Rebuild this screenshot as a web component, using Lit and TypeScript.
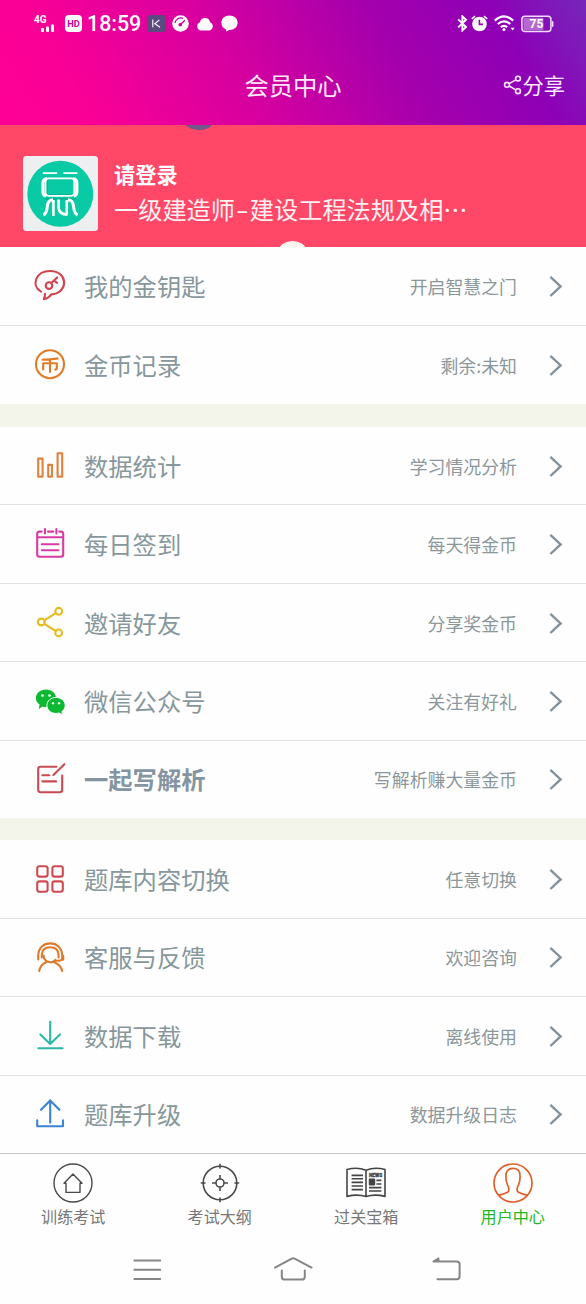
import { LitElement, html, svg, css } from "lit";
import { customElement, property } from "lit/decorators.js";
import { classMap } from "lit/directives/class-map.js";

const CJK = css`"Noto Sans CJK SC", "Liberation Sans", sans-serif`;

const icons: Record<string, any> = {
  key: svg`<g stroke="#d0454f"><path d="M8 22.6C-2.2 16.6 2.6 2 17 2C35.6 2 35.6 24.4 18.4 25.4C16.6 28 14.4 29.4 10.8 30.3C11.7 28.4 12 26.9 12 24.8"/><circle cx="16" cy="16.6" r="3.3"/><path d="M18.2 14.1L24.2 8.4M21.2 11.6L24 13.8"/></g>`,
  coin: svg`<circle cx="17" cy="16.2" r="14" stroke="#e37a26"/><path stroke="#e37a26" stroke-linecap="butt" d="M8.6 11.8Q17 11.6 25.4 10.4M17 11.2V24.8M10.2 22.2V15.2H23.8V20.4Q23.8 21.6 21.4 21.6"/>`,
  bars: svg`<g stroke="#e0823c"><rect x="5.2" y="9.6" width="4.4" height="18"/><rect x="15.2" y="15.9" width="3.8" height="11.7"/><rect x="24.6" y="4.2" width="4.6" height="23.4"/></g>`,
  calendar: svg`<g stroke="#d93aa4"><path d="M8.6 4.6H6.4Q4.2 4.6 4.2 6.8V27.6Q4.2 29.8 6.4 29.8H28Q30.2 29.8 30.2 27.6V6.8Q30.2 4.6 28 4.6H26.2M15 4.6H20.4M4.2 10.2H30.2M12 2V6.4M23.4 2V6.4M8.8 17.2H25.4M8.8 23.2H25.4"/></g>`,
  share: svg`<g stroke="#e4bd22"><circle cx="25.7" cy="5.3" r="3.4"/><circle cx="8.3" cy="16" r="3.4"/><circle cx="25.7" cy="26.9" r="3.4"/><path d="M11.3 14.3L22.8 7.1M11.3 17.8L22.8 25"/></g>`,
  wechat: svg`<g stroke="none"><path fill="#0cb832" d="M13 5.5C7.2 5.5 2.9 9.2 2.9 14C2.9 16.7 4.3 19 6.6 20.6L5.8 25L9.6 22.4C10.7 22.8 11.8 23 13 23C18.8 23 23 18.8 23 14S18.8 5.5 13 5.5Z"/><path stroke="#fff" stroke-width="1" fill="#0cb832" d="M23 13.4C17.8 13.4 13.9 17 13.9 21.4S17.8 29.4 23 29.4C24.1 29.4 25.1 29.2 26 29L29.7 31L28.9 27.6C31 26.1 32.2 23.9 32.2 21.4C32.2 17 28.2 13.4 23 13.4Z"/><g fill="#dff7e2"><circle cx="9.5" cy="11.6" r="1.4"/><circle cx="16.5" cy="11.6" r="1.4"/><circle cx="20" cy="19.2" r="1.2"/><circle cx="26" cy="19.2" r="1.2"/></g></g>`,
  edit: svg`<g stroke="#c74a54"><path d="M23.4 4.8H7.6Q5.2 4.8 5.2 7.2V27.8Q5.2 30.2 7.6 30.2H26.8Q29.2 30.2 29.2 27.8V13.6M31.4 2.2L20.4 13M9.4 13.2H16.4M9.4 19.4H23"/></g>`,
  grid: svg`<g stroke="#cf4b54"><rect x="4.2" y="4.2" width="10.4" height="10.4" rx="2.2"/><rect x="19.4" y="4.2" width="10.4" height="10.4" rx="2.2"/><rect x="4.2" y="19.4" width="10.4" height="10.4" rx="2.2"/><rect x="19.4" y="19.4" width="10.4" height="10.4" rx="2.2"/></g>`,
  service: svg`<g stroke="#df7a2c"><path d="M5.2 19.4V15.2C5.6 7.6 10.6 3.4 17.2 3.4S28.8 7.6 29.2 15.2V19.4"/><path d="M8.8 17.6V15C9 10 12.2 7.2 17.2 7.2S25.4 10 25.6 15V17.6"/><path d="M10.6 15.6C10.6 19.4 13.4 22.2 17.2 22.2C19.6 22.2 21.4 21.2 22.4 19.8M30.2 15.8V19.6L26.4 20.8H22"/><path d="M6.2 31C7 26.8 9.4 23.8 13.2 22.2M21.4 22.2C25.2 23.8 28.2 26.8 29.2 31"/></g>`,
  download: svg`<g stroke="#2cb8a6"><path d="M17.2 2.8V25M7.4 15.4L17.2 25L27 15.4M5.4 29.2H29.6"/></g>`,
  upload: svg`<g stroke="#3a84d2"><path d="M17.2 25.6V3.4M8 12.8L17.2 3.4L26.4 12.8M4.2 23.4V29.2H30V23.4"/></g>`,
  tabHome: svg`<g stroke="#4a4a4a" stroke-width="1.4"><circle cx="20" cy="20" r="19"/><path d="M11 20.2L20 11L29 20.2H27V29.4H13V20.2Z"/></g>`,
  tabTarget: svg`<g stroke="#4a4a4a" stroke-width="1.6"><circle cx="20" cy="20" r="16.8"/><circle cx="20" cy="20" r="4"/><path d="M20 .8V5.6M20 34.4V39.2M.8 20H5.6M34.4 20H39.2M20 12V16M20 24V28M12 20H16M24 20H28"/></g>`,
  tabBook: svg`<g stroke="#454545" stroke-width="1.6"><path d="M20 7.2C14.5 5 6.5 5 1 6.6V33.4C6.5 32 14.5 31.8 20 33.6C25.5 31.8 33.5 32 39 33.4V6.6C33.5 5 25.5 5 20 7.2ZM20 7.2V33.6"/><path d="M5.6 12.4H17M5.6 15.8H17M5.6 19.4H17M5.6 23H17M5.6 26.6H17M30.4 17.4H35.4M30.4 21H35.4M23 24.6H35.4M23 28H35.4"/><rect x="23.6" y="16.4" width="4.8" height="5.2" fill="#454545"/></g><text x="29.6" y="13.8" text-anchor="middle" textLength="13.4" lengthAdjust="spacingAndGlyphs" font-family="Roboto, sans-serif" font-size="5" font-weight="900" fill="#454545" stroke="#454545" stroke-width=".3">NEWS</text>`,
  tabUser: svg`<g stroke="#e0602c" stroke-width="1.7"><circle cx="20" cy="20" r="19"/><path d="M5.6 32.4C9.5 31 14 30.4 15.6 28.2C16.4 26 15.8 24 14.4 21.6C13 18.6 12.8 15 13 12.2C13.2 7.8 15.6 5.4 20 5.4S26.8 7.8 27 12.2C27.2 15 27 18.6 25.6 21.6C24.2 24 23.6 26 24.4 28.2C26 30.4 30.5 31 34.4 32.4"/></g>`,
};

interface Entry { icon: string; label: string; note: string; strong?: boolean }

const groups: Entry[][] = [
  [
    { icon: "key", label: "我的金钥匙", note: "开启智慧之门" },
    { icon: "coin", label: "金币记录", note: "剩余:未知" },
  ],
  [
    { icon: "bars", label: "数据统计", note: "学习情况分析" },
    { icon: "calendar", label: "每日签到", note: "每天得金币" },
    { icon: "share", label: "邀请好友", note: "分享奖金币" },
    { icon: "wechat", label: "微信公众号", note: "关注有好礼" },
    { icon: "edit", label: "一起写解析", note: "写解析赚大量金币", strong: true },
  ],
  [
    { icon: "grid", label: "题库内容切换", note: "任意切换" },
    { icon: "service", label: "客服与反馈", note: "欢迎咨询" },
    { icon: "download", label: "数据下载", note: "离线使用" },
    { icon: "upload", label: "题库升级", note: "数据升级日志" },
  ],
];

const tabs = [
  { icon: "tabHome", label: "训练考试" },
  { icon: "tabTarget", label: "考试大纲" },
  { icon: "tabBook", label: "过关宝箱" },
  { icon: "tabUser", label: "用户中心", active: true },
];

@customElement("status-bar")
class StatusBar extends LitElement {
  static styles = css`
    :host { display: flex; height: 47px; align-items: center; padding: 0 32px 0 34px; color: #fff; font-family: ${CJK}; }
    svg { display: block; flex: none; }
    text { font-family: Roboto, sans-serif; font-weight: 700; }
    .hd { margin-left: 10px; }
    .time { margin-left: 5px; width: 55px; font: 500 21.4px/24px Roboto, sans-serif; white-space: nowrap; }
    .app { margin-left: 6px; }
    .next { margin-left: 7px; }
    .space { flex: 1; }
    .alarm { margin-left: 3px; }
    .wifi { margin-left: 6px; }
    .battery { margin-left: 6px; }
  `;
  render() {
    return html`
      <svg width="21" height="20" viewBox="0 0 21 20" fill="#fff"><text x="0" y="8.8" font-size="10">4G</text><rect x="7" y="14" width="3" height="4" rx="1"/><rect x="12" y="12.5" width="3" height="5.5" rx="1"/><rect x="17" y="10.5" width="3" height="7.5" rx="1"/></svg>
      <svg class="hd" width="17" height="17" viewBox="0 0 17 17"><rect width="17" height="17" rx="4" fill="#fff"/><text x="8.5" y="12" text-anchor="middle" font-size="9.8" textLength="12.6" lengthAdjust="spacingAndGlyphs" fill="#c8009c">HD</text></svg>
      <span class="time">18:59</span>
      <svg class="app" width="17" height="17" viewBox="0 0 17 17" fill="none" stroke="#fff" stroke-width="1.1"><rect width="17" height="17" rx="1.5" fill="#5b4a7e" stroke="none"/><path d="M4.8 4.6V12.2M11.4 4.8L6.8 8.8L12 12.2"/></svg>
      <svg class="next" width="17" height="17" viewBox="0 0 17 17"><circle cx="8.5" cy="8.5" r="8.3" fill="#fff"/><path d="M3 8A5.8 5.8 0 0 1 11 3.4M8.2 10L12.8 5.2" stroke="#c800a6" stroke-width="1.3" fill="none"/><circle cx="8.2" cy="9.8" r="1.8" fill="#c800a6"/></svg>
      <svg class="next" width="18" height="15" viewBox="0 0 18 15" fill="#fff"><path d="M4.5 14.4A4.3 4.3 0 0 1 4 6.2A5.1 5.1 0 0 1 14 6.2A4.3 4.3 0 0 1 13.5 14.4Z"/></svg>
      <svg class="next" width="17" height="17" viewBox="0 0 17 17" fill="#fff"><path d="M8.5 .6C3.8 .6.4 3.7.4 7.8C.4 11 2.2 13.4 5 14.4L5.2 16.6L8.4 15C13 15 16.6 12 16.6 7.8S13.2.6 8.5.6Z"/></svg>
      <span class="space"></span>
      <svg width="11" height="17" viewBox="0 0 11 17" fill="none" stroke="#fff" stroke-width="1.9"><path d="M1.2 4.4L9 12L5.4 15.4V1.4L9 4.8L1.2 12.4"/></svg>
      <svg class="alarm" width="17" height="17" viewBox="0 0 17 17"><circle cx="8.5" cy="9" r="7.3" fill="#fff"/><path d="M.8 4L4 1.2M16.2 4L13 1.2" stroke="#fff" stroke-width="1.6"/><path d="M8.4 4.8V9.4H12" stroke="#9a00ae" stroke-width="1.6" fill="none"/></svg>
      <svg class="wifi" width="21" height="17" viewBox="0 0 21 17" fill="none" stroke="#fff" stroke-width="2.2"><path d="M.8 5.6Q10 -2.8 19.2 5.6M3.8 9Q10 3.6 16.2 9M6.8 12.2Q10 9.6 13.2 12.2"/><circle cx="10" cy="14.6" r="1.5" fill="#fff" stroke="none"/><path d="M16.6 12.8H20.6L18.6 15.6Z" fill="#fff" stroke="none"/></svg>
      <svg class="battery" width="33" height="18" viewBox="0 0 33 18"><rect x=".9" y="1.2" width="29" height="15.4" rx="3" fill="none" stroke="#f3dcff" stroke-width="1.5"/><rect x="2.4" y="2.8" width="20" height="12.4" rx="1" fill="#fff" opacity=".38"/><rect x="30.8" y="6" width="1.6" height="6" rx=".8" fill="#f3dcff"/><text x="15.4" y="13.2" font-size="12" text-anchor="middle" fill="#fff">75</text></svg>
    `;
  }
}

@customElement("menu-row")
class MenuRow extends LitElement {
  @property({ attribute: false }) entry!: Entry;
  static styles = css`
    :host { display: flex; flex: 1; align-items: center; box-sizing: border-box; padding: 0 23px 0 33px; font-family: ${CJK}; }
    .icon { flex: none; fill: none; stroke-width: 2.1; stroke-linejoin: round; stroke-linecap: round; }
    .label { flex: 1; margin-left: 17px; font-size: 24.3px; line-height: 36px; color: #87979c; }
    .strong { font-weight: 700; color: #8495a1; }
    .note { font-size: 17.9px; line-height: 28px; color: #8b979b; }
    .chevron { flex: none; margin-left: 32px; fill: none; stroke: #82919b; stroke-width: 2.4; }
  `;
  render() {
    const { icon, label, note, strong } = this.entry;
    return html`
      <svg class="icon" width="34" height="34" viewBox="0 0 34 34">${icons[icon]}</svg>
      <span class=${classMap({ label: true, strong: !!strong })}>${label}</span>
      <span class="note">${note}</span>
      <svg class="chevron" width="14" height="22" viewBox="0 0 14 22"><path d="M1.4 1.8L11.6 11.4L1.4 21"/></svg>
    `;
  }
}

@customElement("app-root")
class AppRoot extends LitElement {
  static styles = css`
    :host { display: flex; flex-direction: column; width: 586px; height: 1304px; overflow: hidden; background: #fefefe; font-family: ${CJK}; }
    svg { display: block; }
    .header { flex: none; height: 125px; color: #fff; background: linear-gradient(60deg, #ff0096 0%, #fa0096 14%, #d400a0 42%, #a600ac 65%, #8e00b6 85%, #7527ba 100%); }
    .titlebar { display: grid; grid-template-columns: 1fr auto 1fr; height: 76px; align-items: center; padding: 0 21px; color: #ffeaff; }
    .title { grid-column: 2; font-size: 24.3px; line-height: 36px; }
    .action { display: flex; justify-content: flex-end; align-items: center; gap: 1px; font-size: 21.2px; line-height: 32px; }
    .profile { position: relative; flex: none; display: flex; align-items: center; box-sizing: border-box; height: 122px; padding: 15px 0 0 23px; background: #ff4767; color: #fff; overflow: hidden; }
    .bump-top { position: absolute; left: 183px; top: -17px; width: 32px; height: 22px; border-radius: 50%; background: #71588c; }
    .bump-bottom { position: absolute; left: 279px; top: 116px; width: 27px; height: 18px; border-radius: 50%; background: #faf4ee; }
    .names { display: flex; flex-direction: column; margin-left: 16px; padding-bottom: 3px; }
    .login { font-size: 21.2px; line-height: 34px; font-weight: 700; }
    .course { font-size: 24.2px; line-height: 36px; color: #fff0f2; white-space: nowrap; }
    .dash { display: inline-block; width: 8.5px; margin: 0 3.2px; text-align: center; transform: scaleX(1.5); }
    .group { flex: none; display: flex; flex-direction: column; }
    .group.n2 { height: 157px; }
    .group.n5 { height: 391px; }
    .group.n4 { height: 313px; }
    .group menu-row + menu-row { border-top: 1px solid #dfe1e3; }
    .band { flex: none; height: 23px; background: #f4f5ea; }
    .band.short { height: 22px; }
    .tabs { flex: none; display: grid; grid-template-columns: repeat(4, 1fr); box-sizing: border-box; height: 83px; border-top: 1px solid #c4c4c4; padding-top: 9px; }
    .tab { display: flex; flex-direction: column; align-items: center; font-size: 16.1px; line-height: 24px; color: #777; gap: 1px; }
    .tab svg { fill: none; stroke-linejoin: round; }
    .active { color: #22b922; }
    .nav { flex: 1; display: flex; align-items: flex-start; justify-content: space-between; padding: 20px 123px 0 132px; }
    .nav svg { fill: none; stroke: #858585; stroke-width: 2; stroke-linecap: round; stroke-linejoin: round; }
  `;
  render() {
    return html`
      <header class="header">
        <status-bar></status-bar>
        <div class="titlebar">
          <span class="title">会员中心</span>
          <span class="action">
            <svg width="19" height="20" viewBox="0 0 19 20" fill="none" stroke="#ffeaff" stroke-width="1.6"><circle cx="15" cy="3.6" r="2.4"/><circle cx="4" cy="9.8" r="2.4"/><circle cx="15" cy="16.2" r="2.4"/><path d="M6.2 8.6L12.8 4.9M6.2 11L12.8 14.9"/></svg>
            分享
          </span>
        </div>
      </header>
      <section class="profile">
        <i class="bump-top"></i><i class="bump-bottom"></i>
        <svg width="75" height="75" viewBox="0 0 75 75">
          <rect width="75" height="75" rx="3.5" fill="#eeeff0"/>
          <circle cx="37.3" cy="37.8" r="33" fill="#08cba5"/>
          <path d="M22 43H53M24 24V39H51" fill="none" stroke="#078d78" stroke-width="1.4" opacity=".5"/>
          <g fill="none" stroke="#fff" stroke-width="1.7">
            <path d="M19.8 17.2H34.2M40.4 17.2H54.4"/>
            <rect x="22.6" y="22.4" width="28.6" height="17.4" rx="3"/>
            <path stroke-width="3.2" d="M24 22.6Q20 23.4 20 27V36Q20 39.4 23 39.8M50 22.6Q53.8 23.4 53.8 27V36Q53.8 39.4 50.8 39.8"/>
            <path stroke-width="3" d="M20.4 59C25 57 23.8 51 24.8 47.6Q25.8 44.2 30 43.8M54.6 59C50 57 51 51 50 47.6Q49 44.2 44.8 43.8"/>
            <path stroke-width="2.6" d="M30.4 44V60M35.6 43.4V52Q36.4 58.6 44.4 58.6M43.8 44V58.6"/>
          </g>
        </svg>
        <div class="names">
          <span class="login">请登录</span>
          <span class="course">一级建造师<span class="dash">-</span>建设工程法规及相…</span>
        </div>
      </section>
      ${groups.map((g, i) => html`
        ${i ? html`<div class=${classMap({ band: true, short: i === 2 })}></div>` : ""}
        <div class="group n${g.length}">${g.map((e) => html`<menu-row .entry=${e}></menu-row>`)}</div>
      `)}
      <nav class="tabs">
        ${tabs.map((t) => html`<div class=${classMap({ tab: true, active: !!t.active })}>
          <svg width="40" height="40" viewBox="0 0 40 40">${icons[t.icon]}</svg><span>${t.label}</span>
        </div>`)}
      </nav>
      <div class="nav">
        <svg width="30" height="28" viewBox="0 0 30 28"><path d="M2.4 4.4H28.2M2.4 13.7H28.2M2.4 23H28.2"/></svg>
        <svg width="40" height="28" viewBox="4 0 40 28" overflow="visible"><path d="M2 11.6L18.8 2.6Q20.2 2 21.6 2.6L38.6 11.6M8.8 14.4V20.4Q8.8 23.6 12 23.6H28.6Q31.8 23.6 31.8 20.4V14.4"/></svg>
        <svg width="32" height="28" viewBox="0 0 32 28"><path d="M7.4 2.6L2.4 5.6H25.6Q28.6 5.6 28.6 8.6V20.6Q28.6 23.2 25.6 23.2H6.4M7.4 2.6V5.6"/></svg>
      </div>
    `;
  }
}
